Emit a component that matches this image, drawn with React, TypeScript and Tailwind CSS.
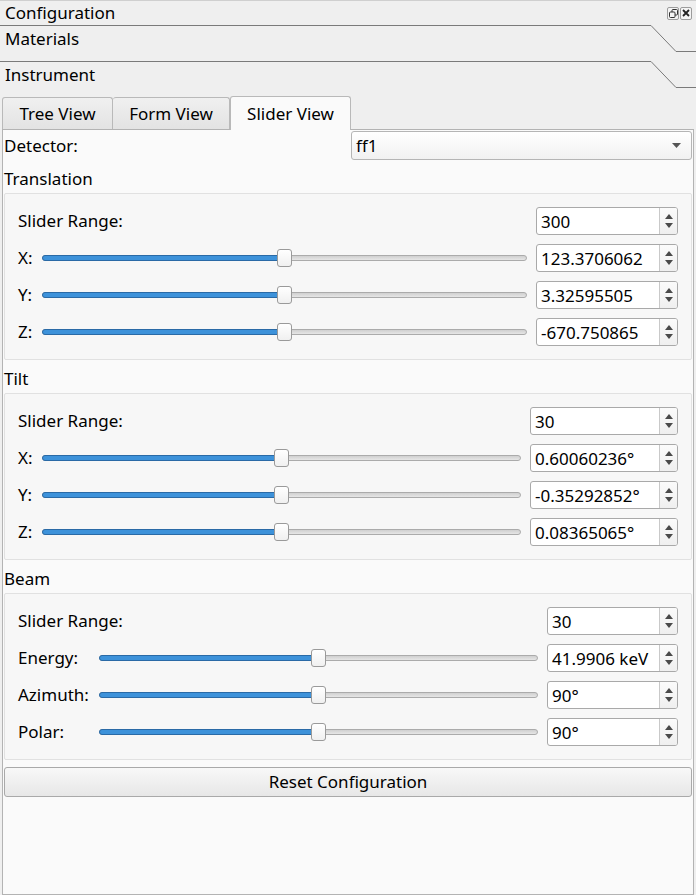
import React from 'react';

const FONT = { fontFamily: '"Noto Sans", "Open Sans", sans-serif' };

/** Small up/down arrow pair used on the right of a spin box */
const SpinArrows = () => (
  <div className="flex w-[18px] flex-col items-center justify-center gap-[4px] border-l border-[#c9c9c9] bg-gradient-to-b from-[#fbfbfb] to-[#efefef]">
    <svg width="8" height="5" viewBox="0 0 8 5">
      <path d="M4 0 L8 5 L0 5 Z" fill="#4a4a4a" />
    </svg>
    <svg width="8" height="5" viewBox="0 0 8 5">
      <path d="M0 0 L8 0 L4 5 Z" fill="#4a4a4a" />
    </svg>
  </div>
);

const SpinBox = ({ value }: { value: string }) => (
  <div className="flex h-[28px] w-full overflow-hidden rounded-[3px] border border-[#a9a9a9] bg-white">
    <div className="flex flex-1 items-center pl-[4px] text-[17px] leading-none text-black whitespace-nowrap">{value}</div>
    <SpinArrows />
  </div>
);

/** Horizontal slider: blue filled part, gray remainder, white handle */
const Slider = ({ pos }: { pos: number }) => (
  <div className="relative h-[18px] w-full">
    <div className="absolute left-0 right-0 top-[6px] h-[6px] rounded-full border border-[#ababab] bg-gradient-to-b from-[#d0d0d0] to-[#e6e6e6]" />
    <div
      className="absolute left-0 top-[6px] h-[6px] rounded-l-full border border-[#2a6aa6] bg-[#3d92da]"
      style={{ width: `calc(${pos} * (100% - 15px) + 4px)` }}
    />
    <div
      className="absolute top-0 h-[18px] w-[15px] rounded-[3px] border border-[#9a9a9a] bg-gradient-to-b from-white to-[#f0f0f0]"
      style={{ left: `calc(${pos} * (100% - 15px))` }}
    />
  </div>
);

interface Row {
  label: string;
  value: string;
  pos: number;
}

const Group = ({
  title,
  range,
  rows,
  cols,
}: {
  title: string;
  range: string;
  rows: Row[];
  cols: string;
}) => (
  <div>
    <div className="flex h-[33px] items-end pb-[2px] text-[17px]">{title}</div>
    <div className="rounded-[2px] border border-[#e1e1e1] bg-[#f7f7f7] px-[13px] py-[13px]">
      <div className={`grid ${cols} items-center gap-x-[9px] gap-y-[9px]`}>
        <div className="col-span-2 text-[17px]">Slider Range:</div>
        <SpinBox value={range} />
        {rows.map((r) => (
          <React.Fragment key={r.label}>
            <div className="text-[17px] whitespace-nowrap">{r.label}</div>
            <Slider pos={r.pos} />
            <SpinBox value={r.value} />
          </React.Fragment>
        ))}
      </div>
    </div>
  </div>
);

/** Toolbox page header with the slanted line on the right */
const ToolboxHeader = ({ label }: { label: string }) => (
  <div className="relative h-[36px] bg-[#efefef]">
    <svg className="absolute left-0 top-0" width="696" height="36" viewBox="0 0 696 36">
      <path d="M0 0.5 H651 L676 26.5 H696" fill="none" stroke="#7a7a7a" strokeWidth="1" />
    </svg>
    <div className="relative pl-[5px] pt-[1px] text-[17px] text-black">{label}</div>
  </div>
);

export default function App() {
  return (
    <div style={FONT} className="h-[895px] w-[696px] overflow-hidden bg-[#efefef] text-black">
      {/* Dock title */}
      <div className="flex h-[25px] items-center justify-between border-t border-[#cfcfcf] pl-[5px] pr-[4px]">
        <span className="text-[17px]">Configuration</span>
        <div className="flex gap-[1px]">
          <div className="flex h-[13px] w-[12px] items-center justify-center rounded-[2px] border border-[#9c9c9c] bg-[#f4f4f4]">
            <svg width="9" height="9" viewBox="0 0 9 9">
              <rect x="3" y="0.5" width="5.5" height="5.5" rx="1" fill="none" stroke="#333" strokeWidth="1" />
              <rect x="0.5" y="3" width="5.5" height="5.5" rx="1" fill="#f4f4f4" stroke="#333" strokeWidth="1" />
            </svg>
          </div>
          <div className="flex h-[13px] w-[12px] items-center justify-center rounded-[2px] border border-[#9c9c9c] bg-[#f4f4f4]">
            <svg width="8" height="8" viewBox="0 0 8 8">
              <path d="M1 1 L7 7 M7 1 L1 7" stroke="#222" strokeWidth="1.8" />
            </svg>
          </div>
        </div>
      </div>

      <ToolboxHeader label="Materials" />
      <ToolboxHeader label="Instrument" />

      {/* Tabs */}
      <div className="flex h-[32px] items-end pl-[2px]">
        <div className="flex h-[32px] w-[111px] items-center justify-center rounded-t-[3px] border border-b-0 border-[#b9b9b9] bg-gradient-to-b from-[#f0f0f0] to-[#e3e3e3] text-[17px]">
          Tree View
        </div>
        <div className="flex h-[32px] w-[117px] items-center justify-center rounded-t-[3px] border border-b-0 border-l-0 border-[#b9b9b9] bg-gradient-to-b from-[#f0f0f0] to-[#e3e3e3] text-[17px]">
          Form View
        </div>
        <div className="relative z-10 -mb-[1px] flex h-[34px] w-[121px] items-center justify-center rounded-t-[3px] border border-b-0 border-[#b9b9b9] bg-[#fafafa] text-[17px]">
          Slider View
        </div>
      </div>

      {/* Tab page */}
      <div className="mx-[2px] h-[766px] border border-[#b3b3b3] bg-[#fafafa] px-[1px]">
        <div className="flex h-[30px] items-end">
          <div className="w-[347px] self-center pt-[2px] text-[17px]">Detector:</div>
          <div className="flex h-[29px] flex-1 items-center justify-between rounded-[3px] border border-[#b5b5b5] bg-gradient-to-b from-white to-[#f1f1f1] pl-[4px] pr-[10px]">
            <span className="text-[17px]">ff1</span>
            <svg width="9" height="5" viewBox="0 0 9 5">
              <path d="M0 0 L9 0 L4.5 5 Z" fill="#555" />
            </svg>
          </div>
        </div>

        <Group
          title="Translation"
          range="300"
          cols="grid-cols-[15px_1fr_142px]"
          rows={[
            { label: 'X:', value: '123.3706062', pos: 0.501 },
            { label: 'Y:', value: '3.32595505', pos: 0.5 },
            { label: 'Z:', value: '-670.750865', pos: 0.5 },
          ]}
        />
        <Group
          title="Tilt"
          range="30"
          cols="grid-cols-[15px_1fr_148px]"
          rows={[
            { label: 'X:', value: '0.60060236°', pos: 0.5 },
            { label: 'Y:', value: '-0.35292852°', pos: 0.5 },
            { label: 'Z:', value: '0.08365065°', pos: 0.5 },
          ]}
        />
        <Group
          title="Beam"
          range="30"
          cols="grid-cols-[72px_1fr_131px]"
          rows={[
            { label: 'Energy:', value: '41.9906 keV', pos: 0.5 },
            { label: 'Azimuth:', value: '90°', pos: 0.5 },
            { label: 'Polar:', value: '90°', pos: 0.5 },
          ]}
        />

        <div className="mt-[7px] flex h-[30px] items-center justify-center rounded-[3px] border border-[#a9a9a9] bg-gradient-to-b from-[#f8f8f8] to-[#e7e7e7] text-[17px]">
          Reset Configuration
        </div>
      </div>
    </div>
  );
}
